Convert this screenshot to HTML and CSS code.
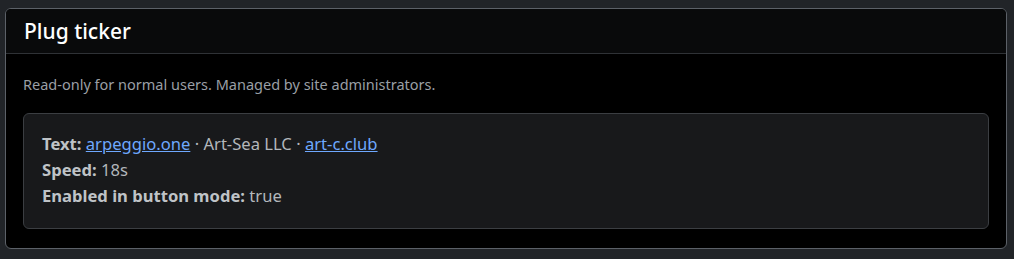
FILE: index.html
```html
<!DOCTYPE html>
<html lang="en">
  <head>
    <meta charset="UTF-8" />
    <meta name="viewport" content="width=device-width, initial-scale=1.0" />
    <title>Plug ticker</title>
    <link rel="stylesheet" href="styles.css">
  </head>
  <body>
    <div class="card">
      <div class="card-header">
        <h2>Plug ticker</h2>
      </div>
      <div class="card-body">
        <p class="muted">Read-only for normal users. Managed by site administrators.</p>
        <div class="info">
          <div><b>Text:</b> <a href="#">arpeggio.one</a> · Art-Sea LLC · <a href="#">art-c.club</a></div>
          <div><b>Speed:</b> 18s</div>
          <div><b>Enabled in button mode:</b> true</div>
        </div>
      </div>
    </div>
  </body>
</html>
```

FILE: styles.css
```css
/* General styling */
body {
  font-family: "Noto Sans", sans-serif;
  background-color: #212428;
  color: #c4c8cc;
  margin: 0;
  padding: 8px 7px 0 5px;
}

.card {
  background-color: #000;
  border: 1px solid #5c6168;
  border-radius: 6px;
  overflow: hidden;
}

.card-header {
  background-color: #090a0b;
  border-bottom: 1px solid #2f3236;
  height: 44px;
  display: flex;
  align-items: center;
  padding: 0 18px;
}

.card-header h2 {
  margin: 0;
  font-size: 21px;
  font-weight: 500;
  color: #fff;
}

.card-body {
  padding: 20px 17px 19px 17px;
}

.muted {
  margin: 0 0 19px 0;
  font-size: 14.5px;
  color: #9a9fa5;
}

/* Info box */
.info {
  background-color: #18191b;
  border: 1px solid #3b3e42;
  border-radius: 6px;
  padding: 17px 18px 19px 18px;
  font-size: 16.6px;
  line-height: 26px;
  color: #b3b7bb;
}

.info b {
  color: #bfc3c7;
}

.info a {
  color: #6ea8fe;
}
```
